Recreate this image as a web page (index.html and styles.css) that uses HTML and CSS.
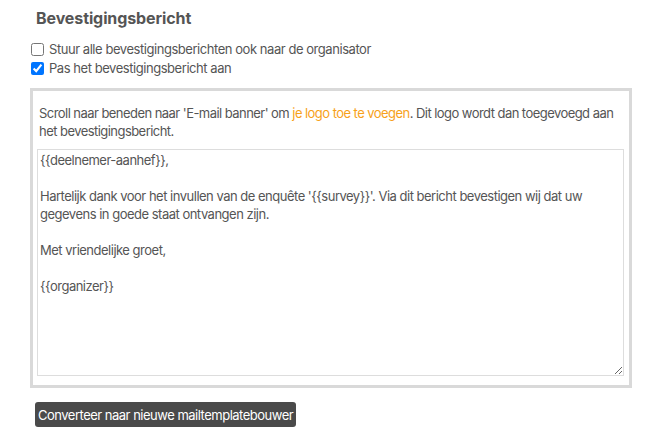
FILE: index.html
```html
<!DOCTYPE html>
<html lang="nl">
<head>
    <meta charset="UTF-8">
    <meta name="viewport" content="width=device-width, initial-scale=1.0">
    <title>Bevestigingsbericht</title>
    <link rel="stylesheet" href="styles.css">
</head>
<body>

<div class="section">
    <h2 class="section-title">Bevestigingsbericht</h2>

    <label class="check">
        <input type="checkbox">
        <span>Stuur alle bevestigingsberichten ook naar de organisator</span>
    </label>
    <label class="check">
        <input type="checkbox" checked>
        <span>Pas het bevestigingsbericht aan</span>
    </label>

    <!-- Editor voor het bevestigingsbericht -->
    <div class="editor-box">
        <p class="hint">Scroll naar beneden naar 'E-mail banner' om <a href="#" class="link">je logo toe te voegen</a>. Dit logo wordt dan toegevoegd aan het bevestigingsbericht.</p>
        <textarea class="message">{{deelnemer-aanhef}},

Hartelijk dank voor het invullen van de enquête '{{survey}}'. Via dit bericht bevestigen wij dat uw gegevens in goede staat ontvangen zijn.

Met vriendelijke groet,

{{organizer}}</textarea>
    </div>

    <button class="convert-btn">Converteer naar nieuwe mailtemplatebouwer</button>
</div>

</body>
</html>
```

FILE: styles.css
```css
body {
    font-family: Inter, "Liberation Sans", sans-serif;
    color: #555555;
    background-color: #ffffff;
    margin: 0;
}
.section {
    padding: 8px 21px 0 30px;
}
.section-title {
    font-size: 16px;
    font-weight: 700;
    color: #555555;
    margin: 0 0 12px 6px;
    line-height: 20px;
    letter-spacing: -0.1px;
}
.check {
    display: flex;
    align-items: center;
    gap: 5px;
    font-size: 13px;
    line-height: 19px;
    letter-spacing: -0.45px;
}
.check input {
    width: 13px;
    height: 13px;
    margin: 0 0 0 1px;
}
.editor-box {
    margin-top: 10px;
    border: 3px solid #d9d9d9;
    padding: 13px 5px 9px 4px;
}
.hint {
    font-size: 13px;
    line-height: 18px;
    letter-spacing: -0.55px;
    margin: 0 0 9px 2px;
}
.link {
    color: #f7a11a;
    text-decoration: none;
}
.message {
    display: block;
    width: 100%;
    box-sizing: border-box;
    height: 227px;
    border: 1px solid #dddddd;
    padding: 1px 2px;
    font-family: Inter, "Liberation Sans", sans-serif;
    font-size: 13px;
    line-height: 18px;
    letter-spacing: -0.5px;
    color: #555555;
    resize: vertical;
}
.convert-btn {
    margin: 14px 0 0 5px;
    background-color: #4a4a4a;
    color: #ffffff;
    border: none;
    border-radius: 3px;
    padding: 0 3px;
    height: 25px;
    font-family: Inter, "Liberation Sans", sans-serif;
    font-size: 13px;
    letter-spacing: -0.5px;
    cursor: pointer;
}
```
